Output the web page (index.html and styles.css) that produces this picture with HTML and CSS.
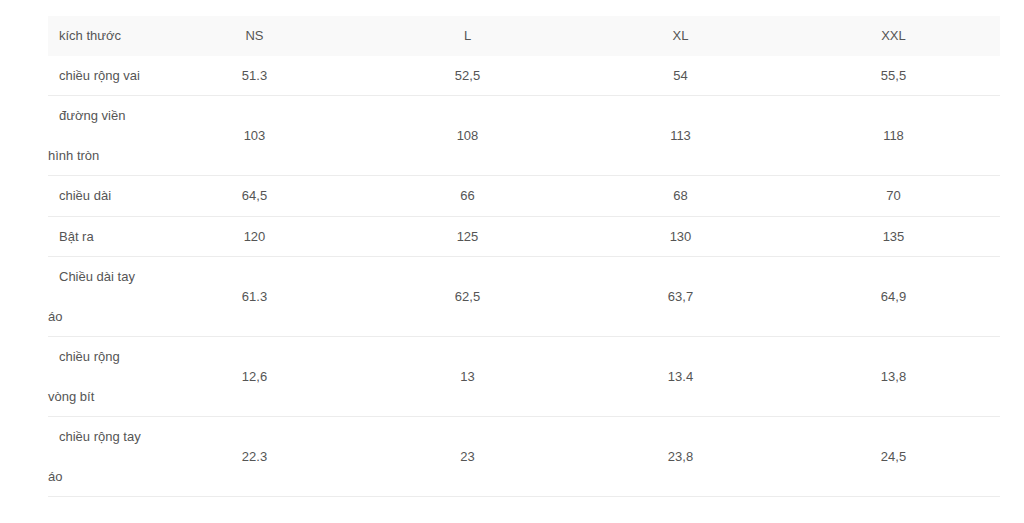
FILE: index.html
```html
<!DOCTYPE html>
<html lang="vi">
<head>
<meta charset="utf-8">
<title>Bảng kích thước</title>
<link rel="stylesheet" href="styles.css">
</head>
<body>
<div class="wrap">
<table class="size-table">
  <colgroup>
    <col class="c-label">
    <col class="c-val"><col class="c-val"><col class="c-val"><col class="c-val">
  </colgroup>
  <thead>
    <tr><th class="label">kích thước</th><th>NS</th><th>L</th><th>XL</th><th>XXL</th></tr>
  </thead>
  <tbody>
    <tr><td class="label">chiều rộng vai</td><td>51.3</td><td>52,5</td><td>54</td><td>55,5</td></tr>
    <tr><td class="label">đường viền hình tròn</td><td>103</td><td>108</td><td>113</td><td>118</td></tr>
    <tr><td class="label">chiều dài</td><td>64,5</td><td>66</td><td>68</td><td>70</td></tr>
    <tr><td class="label">Bật ra</td><td>120</td><td>125</td><td>130</td><td>135</td></tr>
    <tr><td class="label">Chiều dài tay áo</td><td>61.3</td><td>62,5</td><td>63,7</td><td>64,9</td></tr>
    <tr><td class="label">chiều rộng vòng bít</td><td>12,6</td><td>13</td><td>13.4</td><td>13,8</td></tr>
    <tr><td class="label">chiều rộng tay áo</td><td>22.3</td><td>23</td><td>23,8</td><td>24,5</td></tr>
  </tbody>
</table>
</div>
</body>
</html>
```
FILE: styles.css
```css
html, body {
  margin: 0;
  padding: 0;
  background: #ffffff;
}
.wrap {
  padding: 16px 24px 0 48px;
}
.size-table {
  width: 952px;
  border-collapse: collapse;
  table-layout: fixed;
  font-family: "Liberation Sans", Arial, sans-serif;
  font-size: 13px;
  color: #555555;
}
.c-label { width: 100px; }
.size-table th,
.size-table td {
  padding: 0;
  line-height: 39.5px;
  text-align: center;
  vertical-align: middle;
  font-weight: normal;
}
.size-table thead th {
  background: #f9f9f9;
}
.size-table tbody td {
  border-bottom: 1px solid #ececec;
}
.size-table .label {
  text-align: left;
  text-indent: 11px;
}
```
